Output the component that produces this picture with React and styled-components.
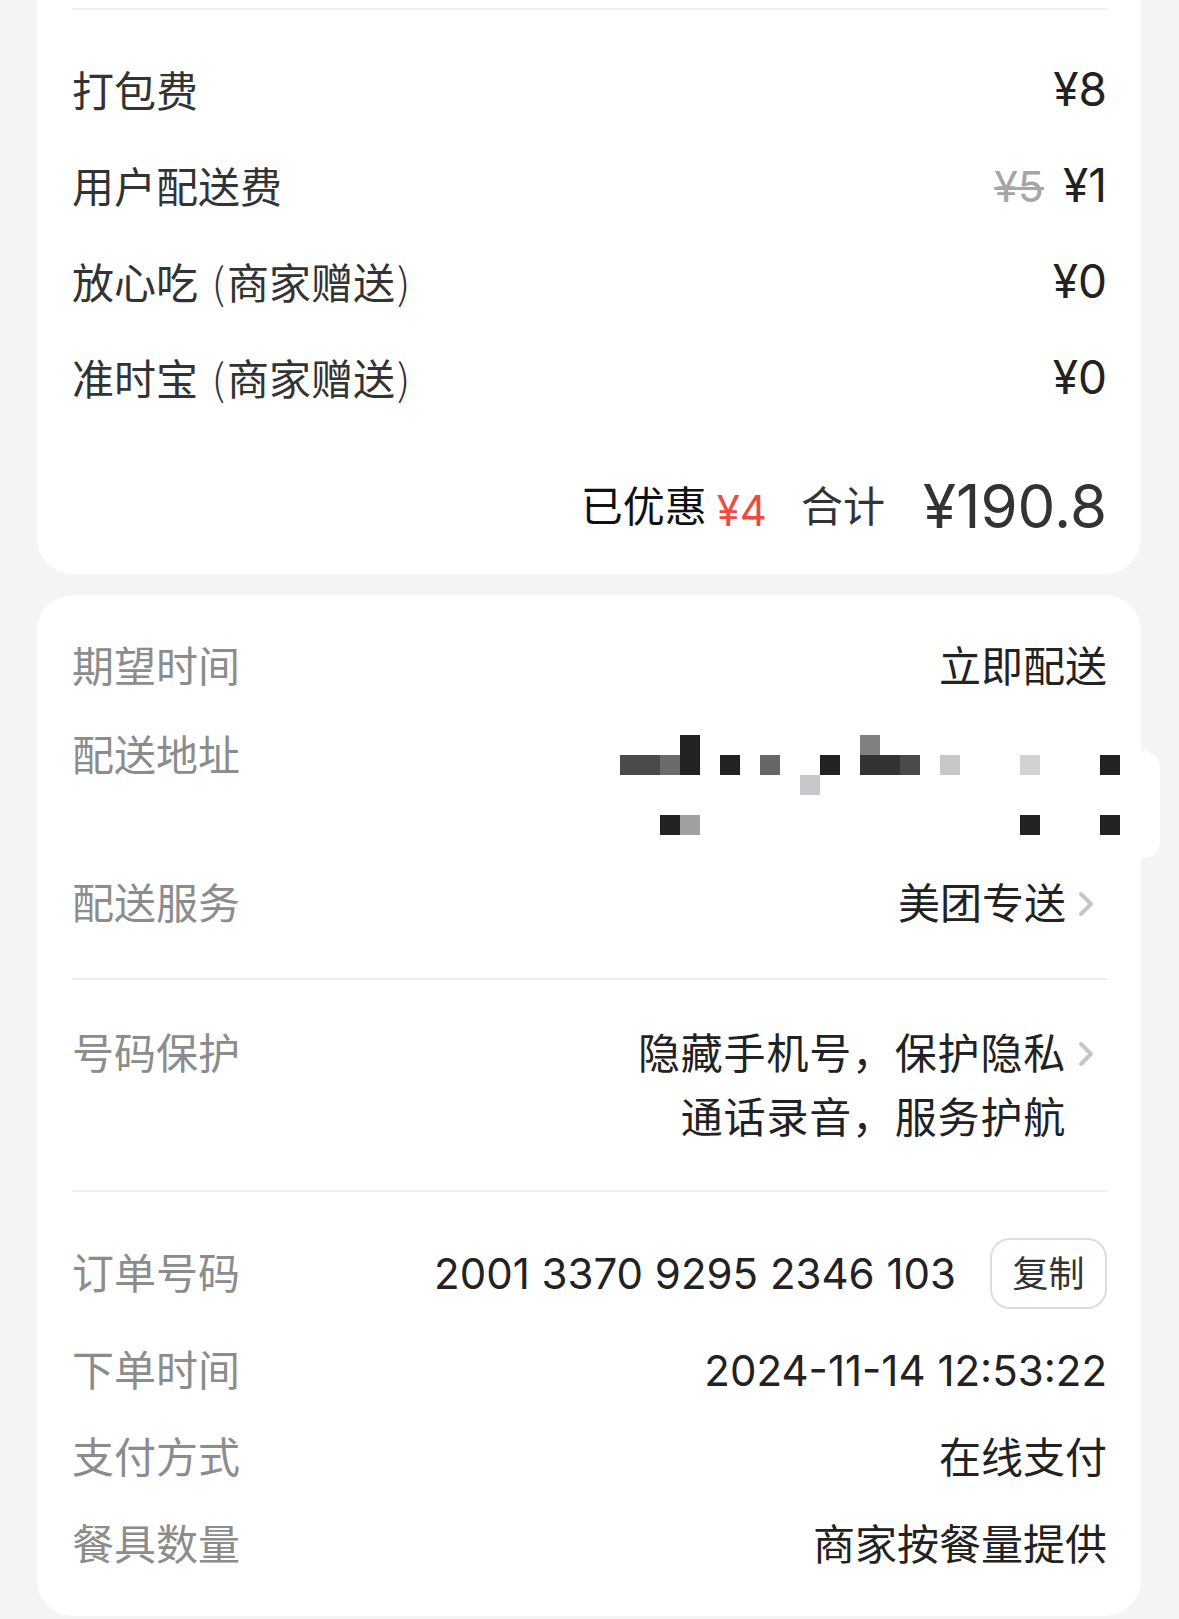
import React from "react";
import styled, { createGlobalStyle } from "styled-components";

const GlobalStyle = createGlobalStyle`
  html, body {
    margin: 0;
    padding: 0;
    background: #f4f4f5;
  }
  body {
    font-family: Inter, "Noto Sans CJK SC", "Noto Sans", sans-serif;
    -webkit-font-smoothing: antialiased;
  }
`;

const Page = styled.div`
  width: 1179px;
  min-height: 1619px;
  box-sizing: border-box;
  padding: 0 38px 0 37px;
  display: flex;
  flex-direction: column;
  gap: 21px;
`;

const Card = styled.section`
  position: relative;
  background: #fff;
  border-radius: ${(p) => (p.$open ? "0 0 36px 36px" : "36px")};
  padding: ${(p) => (p.$open ? "8px 34px 32px 35px" : "40px 34px 40px 35px")};
`;

const Divider = styled.div`
  height: 2px;
  background: #efefef;
`;

const FeeList = styled.div`
  display: flex;
  flex-direction: column;
  gap: 33px;
  margin-top: 47px;
`;

const FeeRow = styled.div`
  display: flex;
  justify-content: space-between;
  align-items: center;
  height: 63px;
`;

const FeeLabel = styled.span`
  font-size: 42px;
  color: #333;
`;

const Paren = styled.span`
  font-family: "Noto Sans CJK SC", sans-serif;
  font-weight: 300;
  margin: 0 2px;
`;

const FeeValue = styled.span`
  display: flex;
  align-items: baseline;
  gap: 19px;
  font-size: 46px;
  color: #222;
`;

const OldPrice = styled.s`
  font-size: 43px;
  color: #a5a5a5;
  text-decoration-thickness: 3px;
`;

const TotalRow = styled.div`
  display: flex;
  justify-content: flex-end;
  align-items: baseline;
  margin-top: 62px;
  height: 72px;
  line-height: 72px;
`;

const Saved = styled.span`
  font-size: 42px;
  color: #111;
  position: relative;
  top: -6px;
`;

const SavedAmount = styled.span`
  font-size: 42px;
  color: #ee4a3f;
  margin-left: 10px;
  position: relative;
  top: -2px;
`;

const TotalLabel = styled.span`
  font-size: 42px;
  color: #333;
  margin-left: 34px;
  position: relative;
  top: -6px;
`;

const TotalAmount = styled.span`
  font-size: 60px;
  color: #333;
  margin-left: 38px;
`;

const Section = styled.div`
  display: flex;
  flex-direction: column;
  gap: ${(p) => p.$gap}px;
  padding: ${(p) => p.$pad};
`;

const InfoRow = styled.div`
  display: flex;
  justify-content: space-between;
  align-items: ${(p) => (p.$center ? "center" : "flex-start")};
  font-size: 42px;
  line-height: ${(p) => p.$lh || 63}px;
  height: ${(p) => (p.$h ? `${p.$h}px` : "auto")};
  margin-bottom: ${(p) => p.$mb || 0}px;
`;

const InfoLabel = styled.span`
  flex-shrink: 0;
  color: #8c8c8c;
`;

const InfoValue = styled.div`
  display: flex;
  align-items: ${(p) => (p.$center ? "center" : "flex-start")};
  color: #222;
  text-align: right;
`;

const WideText = styled.span`
  letter-spacing: 0.8px;
`;

const ChevronBox = styled.span`
  display: flex;
  align-items: center;
  width: 41px;
  height: ${(p) => p.$h || 63}px;
  padding-left: 11px;
  box-sizing: border-box;
`;

const Mosaic = styled.svg`
  display: block;
  margin-top: 11px;
  margin-right: -13px;
`;

const Bump = styled.div`
  position: absolute;
  top: 156px;
  right: -19px;
  width: 20px;
  height: 107px;
  background: #fff;
  border-radius: 0 16px 16px 0;
`;

const CopyButton = styled.button`
  margin-left: 34px;
  width: 117px;
  height: 71px;
  box-sizing: border-box;
  padding: 0;
  border: 2px solid #dddddd;
  border-radius: 20px;
  background: #fff;
  font-family: inherit;
  font-size: 36px;
  line-height: 1;
  color: #333;
`;

const Chevron = () => (
  <svg width="18" height="28" viewBox="0 0 18 28">
    <path
      d="M4 4 L14 14 L4 24"
      fill="none"
      stroke="#c6c6c6"
      strokeWidth="4"
      strokeLinecap="round"
      strokeLinejoin="round"
    />
  </svg>
);

const mosaicCells = [
  [60, 0, 20, "#222"],
  [240, 0, 20, "#808080"],
  [0, 20, 40, "#4a4a4a"],
  [40, 20, 20, "#6b6b6b"],
  [60, 20, 20, "#222"],
  [100, 20, 20, "#222"],
  [140, 20, 20, "#666"],
  [200, 20, 20, "#222"],
  [240, 20, 40, "#333"],
  [280, 20, 20, "#4a4a4a"],
  [320, 20, 20, "#c8c8c8"],
  [400, 20, 20, "#d2d2d2"],
  [480, 20, 20, "#222"],
  [180, 40, 20, "#c8c8cc"],
  [40, 80, 20, "#222"],
  [60, 80, 20, "#a0a0a0"],
  [400, 80, 20, "#222"],
  [480, 80, 20, "#222"],
];

const fees = [
  { label: "打包费", value: "¥8" },
  { label: "用户配送费", value: "¥1", old: "¥5" },
  { label: "放心吃", note: "商家赠送", value: "¥0" },
  { label: "准时宝", note: "商家赠送", value: "¥0" },
];

export default function App() {
  return (
    <>
      <GlobalStyle />
      <Page>
        <Card $open>
          <Divider />
          <FeeList>
            {fees.map((f, i) => (
              <FeeRow key={i}>
                <FeeLabel>
                  {f.label}
                  {f.note && (
                    <>
                      {" "}
                      <Paren>(</Paren>
                      {f.note}
                      <Paren>)</Paren>
                    </>
                  )}
                </FeeLabel>
                <FeeValue>
                  {f.old && <OldPrice>{f.old}</OldPrice>}
                  {f.value}
                </FeeValue>
              </FeeRow>
            ))}
          </FeeList>
          <TotalRow>
            <Saved>已优惠</Saved>
            <SavedAmount>¥4</SavedAmount>
            <TotalLabel>合计</TotalLabel>
            <TotalAmount>¥190.8</TotalAmount>
          </TotalRow>
        </Card>

        <Card>
          <Bump />
          <Section $gap={26} $pad="0 0 43px">
            <InfoRow>
              <InfoLabel>期望时间</InfoLabel>
              <InfoValue>立即配送</InfoValue>
            </InfoRow>
            <InfoRow $h={122}>
              <InfoLabel>配送地址</InfoLabel>
              <Mosaic width="500" height="100" viewBox="0 0 500 100">
                {mosaicCells.map(([x, y, w, c], i) => (
                  <rect key={i} x={x} y={y} width={w} height="20" fill={c} />
                ))}
              </Mosaic>
            </InfoRow>
            <InfoRow>
              <InfoLabel>配送服务</InfoLabel>
              <InfoValue>
                美团专送
                <ChevronBox>
                  <Chevron />
                </ChevronBox>
              </InfoValue>
            </InfoRow>
          </Section>
          <Divider />
          <Section $gap={0} $pad="42px 0 40px">
            <InfoRow $lh={64}>
              <InfoLabel>号码保护</InfoLabel>
              <InfoValue>
                <WideText>
                  隐藏手机号，保护隐私
                  <br />
                  通话录音，服务护航
                </WideText>
                <ChevronBox $h={64}>
                  <Chevron />
                </ChevronBox>
              </InfoValue>
            </InfoRow>
          </Section>
          <Divider />
          <Section $gap={24} $pad="46px 0 0">
            <InfoRow $center $h={71} $mb={6}>
              <InfoLabel>订单号码</InfoLabel>
              <InfoValue $center>
                2001 3370 9295 2346 103
                <CopyButton>复制</CopyButton>
              </InfoValue>
            </InfoRow>
            <InfoRow>
              <InfoLabel>下单时间</InfoLabel>
              <InfoValue>2024-11-14 12:53:22</InfoValue>
            </InfoRow>
            <InfoRow>
              <InfoLabel>支付方式</InfoLabel>
              <InfoValue>在线支付</InfoValue>
            </InfoRow>
            <InfoRow>
              <InfoLabel>餐具数量</InfoLabel>
              <InfoValue>商家按餐量提供</InfoValue>
            </InfoRow>
          </Section>
        </Card>
      </Page>
    </>
  );
}
